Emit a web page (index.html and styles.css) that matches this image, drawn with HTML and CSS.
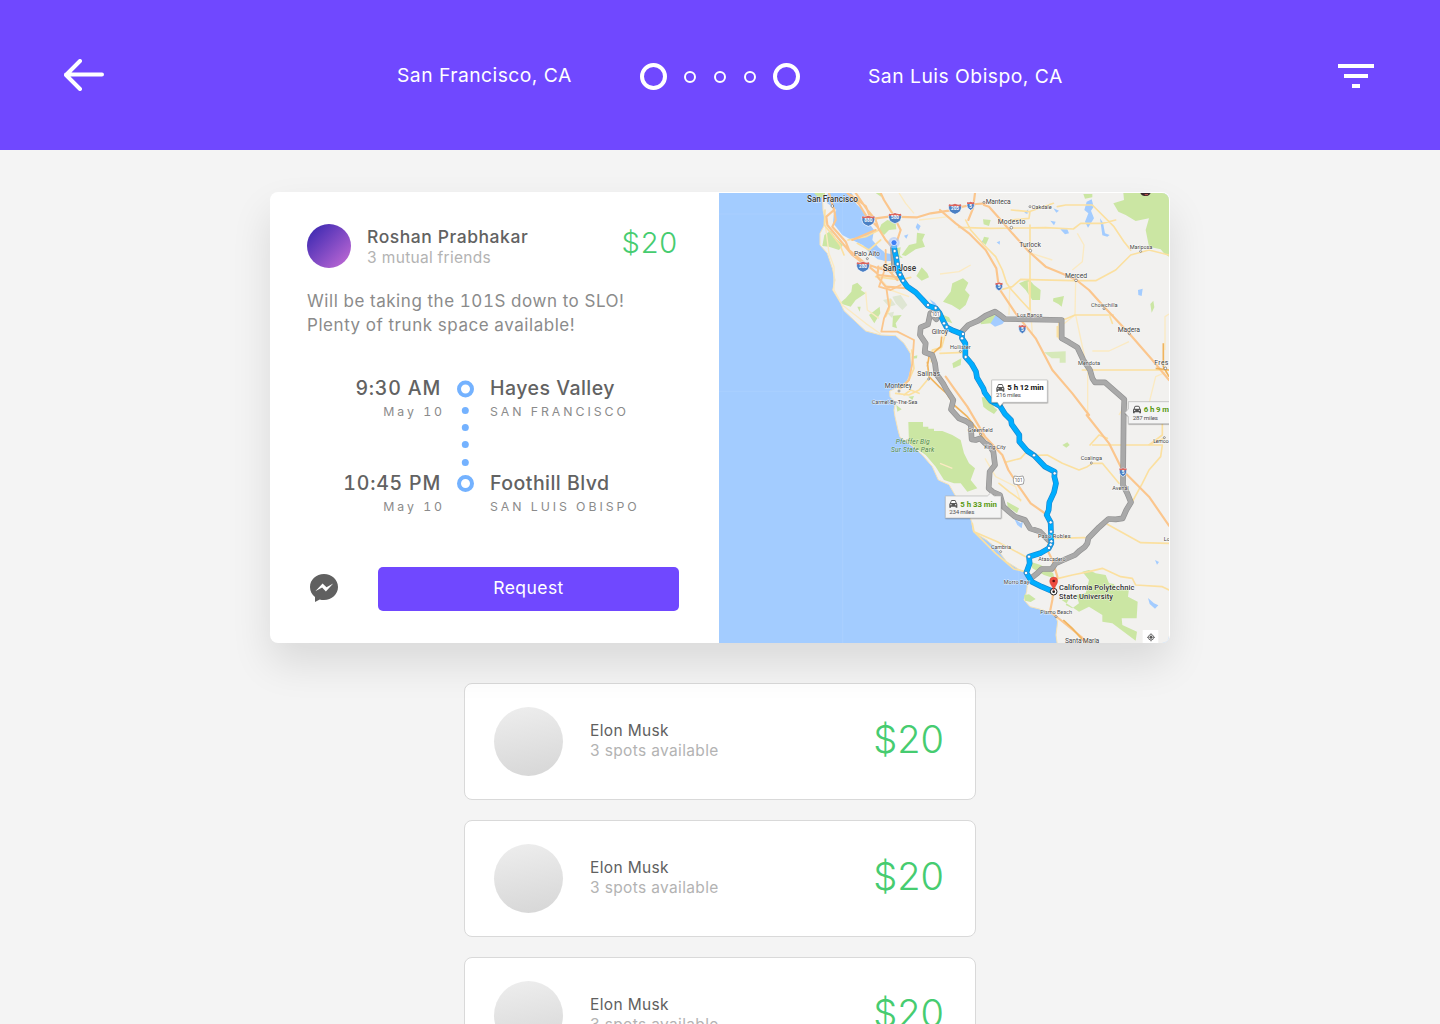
FILE: index.html
```html
<!DOCTYPE html>
<html lang="en">
<head>
<meta charset="utf-8">
<title>Rides</title>
<link rel="stylesheet" href="styles.css">
</head>
<body>
<header class="topbar">
  <svg class="back" width="40" height="32" viewBox="0 0 40 32" fill="none" stroke="#fff" stroke-width="4" stroke-linecap="round" stroke-linejoin="round"><path d="M16 2 2 16l14 14M2 15.500h36"/></svg>
  <span class="from">San Francisco, CA</span>
  <span class="stops"><i class="big"></i><i></i><i></i><i></i><i class="big"></i></span>
  <span class="to">San Luis Obispo, CA</span>
  <svg class="filter" width="36" height="24" viewBox="0 0 36 24" fill="#fff"><path d="M0 0h36v4H0zM6 10h24v4H6zM14 20h8v4h-8z"/></svg>
</header>
<main>
  <section class="ride">
    <div class="details">
      <div class="driver">
        <span class="avatar"></span>
        <div class="who"><div class="name">Roshan Prabhakar</div><div class="mutual">3 mutual friends</div></div>
        <div class="fare">$20</div>
      </div>
      <p class="note">Will be taking the 101S down to SLO!<br>Plenty of trunk space available!</p>
      <div class="trip">
        <div class="times">
          <div class="leg"><b>9:30 AM</b><small>May 10</small></div>
          <div class="leg"><b>10:45 PM</b><small>May 10</small></div>
        </div>
        <svg class="track" width="17" height="113" viewBox="0 0 17 113"><g fill="none" stroke="#74b2ff" stroke-width="4"><circle cx="8.500" cy="9" r="6.500"/><circle cx="8.500" cy="103.500" r="6.500"/></g><g fill="#74b2ff"><circle cx="8.300" cy="30.500" r="3.500"/><circle cx="8.300" cy="47.500" r="3.500"/><circle cx="8.300" cy="64.500" r="3.500"/><circle cx="8.300" cy="82.500" r="3.500"/></g></svg>
        <div class="places">
          <div class="leg"><b>Hayes Valley</b><small>SAN FRANCISCO</small></div>
          <div class="leg"><b>Foothill Blvd</b><small>SAN LUIS OBISPO</small></div>
        </div>
      </div>
      <div class="actions">
        <svg class="messenger" width="28" height="28" viewBox="0 0 28 28"><path fill="#606060" d="M14 0C6.200 0 0 5.700 0 12.900c0 4.100 1.900 7.700 5 10V28l4.700-2.600c1.300.4 2.800.6 4.300.6 7.800 0 14-5.800 14-13S21.800 0 14 0z"/><path fill="#fff" d="M5.300 17.200 12.600 9.400l3.900 3.800 6.700-3.700-7.300 7.900-3.800-4z"/></svg>
        <button class="request">Request</button>
      </div>
    </div>
    <svg class="map" width="450" height="450" viewBox="0 9 1350 1350">
      <defs>
        <g id="shield"><path d="M-18-11Q-9-8 0-13 9-8 18-11 22 0 16 10 9 16 0 19-9 16-16 10-22 0-18-11z" fill="#4a7fc4" stroke="#fff" stroke-width="2"/><path d="M-18-11Q-9-8 0-13 9-8 18-11L19-5H-19z" fill="#e0665c"/></g>
        <g id="shield-s"><path d="M-10-11Q-5-8 0-12 5-8 10-11 13 2 8 8L0 14-8 8Q-13 2-10-11z" fill="#4a7fc4" stroke="#fff" stroke-width="2"/><path d="M-10-11Q-5-8 0-12 5-8 10-11L11-5H-11z" fill="#e0665c"/></g>
        <g id="car"><path d="M3 9 6 2Q7 0 9 0h8q2 0 3 2l3 7 2 3v11h-5v-3H6v3H1V12z" fill="#555"/><path d="M6 9h14l-2-6H8z" fill="#fff"/><circle cx="6" cy="14" r="2" fill="#fff"/><circle cx="20" cy="14" r="2" fill="#fff"/></g>
      </defs>
      <path fill="#a3ccff" d="M0 0h1350v1360H0z"/>
      <path fill="#f2f1ef" stroke="#f6e3b8" stroke-width="3" d="M310 0 312 60 320 98 303 130 303 165 325 190 340 235 348 270 341 300 365 340 375 362 410 395 440 423 485 435 530 437 555 460 574 490 578 530 570 560 560 585 530 595 512 603 513 620 530 637 525 660 528 680 537 720 543 742 580 768 610 795 640 830 658 870 690 884 708 915 748 970 758 995 763 1025 803 1050 833 1075 863 1115 903 1140 921 1150 926 1175 923 1205 915 1230 933 1250 973 1260 1008 1275 1016 1295 1011 1335 1016 1370H1370V0z"/>
      <!-- bays and lakes -->
      <g fill="#a3ccff">
        <path d="M350 0 385 0 400 12 412 42 440 70 450 100 465 120 460 150 478 172 495 185 500 198 488 203 505 214 476 208 450 186 432 166 400 150 388 145 370 135 352 112 342 100 344 75 352 60 340 50 325 40 320 20 330 5z"/>
        <path d="M595 100 605 108 598 122 590 112zM555 137 568 133 562 146zM632 328 648 338 660 355 645 348zM487 187 515 192 520 213 498 214 480 204zM806 390 830 375 848 383 866 382 850 402 828 410 812 398zM1103 35 1118 28 1124 50 1116 62 1125 85 1107 113 1098 95 1108 70 1096 60zM1143 85 1152 98 1158 130 1172 135 1165 140 1150 136zM1024 118 1045 118 1050 130 1038 133zM994 92 1010 95 1005 106zM1257 300 1271 296 1268 318 1258 315zM1003 55 1020 62 1012 68zM916 68 928 58 925 72zM885 985 905 1000 912 992 908 1015 895 1005zM1287 1224 1305 1240 1318 1246 1308 1256 1292 1242zM1308 1110 1320 1116 1314 1124zM785 155 793 150 793 165zM833 157 843 153 842 164z"/>
      </g>
      <!-- parks -->
      <g fill="#cbe6a3">
        <path d="M285 9 318 9 318 18 300 24zM316 135 335 122 350 145 372 165 360 180 330 170 310 168zM400 285 415 278 430 293 425 300 440 310 410 330 395 350 362 340 380 325 397 305zM415 350 425 350 422 365zM487 103 505 90 530 98 532 118 510 120 495 135 480 120zM470 9 486 9 486 20zM594 128 618 132 610 150 618 170 590 178 560 198 548 195 570 165 592 160zM530 175 545 172 542 195 552 205 530 200zM608 232 625 250 630 262 608 272 592 258zM450 375 482 350 484 370 466 400zM522 377 548 375 530 400 534 415 520 410zM578 500 595 496 594 505 580 506zM532 645 548 658 535 665zM568 620 585 618 580 630zM660 370 690 382 700 400 680 393z"/>
        <path d="M700 280 732 265 748 278 738 300 752 315 740 345 722 360 698 345 672 335 695 305zM787 378 830 375 815 400 785 403zM900 280 930 268 945 285 965 300 963 330 940 330 920 300zM1003 325 1035 318 1028 350 1018 342 1002 334zM1294 342 1303 332 1306 352 1298 368zM792 88 815 90 810 108 794 103zM795 140 810 143 800 165 790 155zM1093 12 1120 12 1120 22 1098 26zM1183 40 1215 30 1213 9 1350 9V200L1335 190 1325 178 1290 170 1280 120 1290 85 1250 93 1220 75 1198 65zM700 520 727 505 725 525 703 535z"/>
        <path d="M975 487 1040 484 1040 518 1022 518 1022 505 998 505z" opacity=".7"/>
        <path d="M788 622 826 620 824 650 835 660 825 672 805 660 793 650zM568 696H612V710H628V716H645V723H670L700 735 725 750 735 790 750 820 768 835 755 870 775 895 745 905 725 880 705 880 675 870 650 830 620 795 570 760zM1030 765 1045 757 1052 765 1042 773zM864 935 900 955 894 970 866 950zM934 1115 965 1125 1003 1150 1005 1165 975 1155 940 1135zM915 1215 930 1213 950 1227 935 1236 918 1232zM1028 1230 1050 1227 1040 1245 1060 1255 1080 1240 1072 1215 1100 1210 1110 1170 1090 1145 1110 1140 1130 1150 1160 1155 1170 1180 1185 1182 1190 1200 1230 1195 1227 1220 1256 1235 1253 1285 1208 1285 1210 1305 1254 1325 1250 1352 1220 1330 1180 1300 1150 1295 1150 1275 1110 1250 1080 1265z"/>
      </g>
      <g fill="#dfe6d3"><path d="M520 320 545 315 565 345 550 360 530 340zM492 330 515 325 530 345 510 350zM505 370 525 365 520 385z"/></g>
      <!-- minor roads -->
      <g fill="none" stroke="#fbeac2" stroke-width="4" stroke-linejoin="round">
        <path d="M318 98 330 190 345 230 345 300 370 345 440 400 485 432M440 305 445 360 480 385M480 262 515 300 570 320M600 90 690 80M585 70 560 40 540 9M640 480 665 480 668 435M1070 270 1068 375 1030 405M928 275 940 430M663 252 720 245 755 225M872 295 870 375M1106 545V675M1070 375 1105 540M1120 483H1170L1230 455M1338 480V380L1350 372M1345 545 1310 560 1290 640"/>
        <path d="M663 820 700 835M798 805 830 860 890 890 905 935M1220 640 1200 675M1075 130 1095 165 1090 215 1060 240M937 190 1000 210"/>
      </g>
      <g fill="none" stroke="#fbe0a0" stroke-width="5" stroke-linejoin="round" stroke-linecap="round">
        <path d="M318 60 316 105 340 135 363 165 375 195M387 150 440 140 480 120M415 160 450 180 485 150M478 235 520 220M470 260 545 270 575 262M515 330 510 360 500 380M600 610 575 600 555 615M540 595 570 570 585 535 578 480M530 610 570 615 600 600 625 570M663 490 735 487M637 515 640 480 668 472 685 410"/>
        <path d="M719 112 815 115 980 113 1063 117 1085 100 1150 100 1190 90M933 105V360L905 330 878 300 863 280 850 240 830 200 795 165 755 120 740 90M850 298 880 290 905 268 1060 272H1130L1190 240 1235 195 1290 180 1350 195M877 60 930 65 1003 40M1015 50 1040 45 1120 45 1185 110 1215 155 1235 180M1015 410V440M1020 388V445M1110 375H1183M860 387H1040L1068 375H1165M1090 540H1350M1173 380 1180 400M875 90 930 85 933 65"/>
        <path d="M858 817 905 805 925 783M945 796 985 795 1030 820 1080 840 1105 830 1120 820 1150 820 1175 850 1200 880M1121 765H1330L1325 800 1290 840 1270 880 1240 935M1113 765 1140 735 1165 745M1288 765 1335 745M1165 1003 1265 1058 1350 1060M1000 1045 1098 1043M1018 1165 1060 1155 1110 1145 1150 1135 1205 1160 1240 1165 1250 1185 1330 1190 1350 1200M760 1000 765 1025 835 1055 920 1100M765 1025 830 1090 885 1137 920 1145M1290 765 1330 735V675M840 880 870 905 905 930"/>
      </g>
      <!-- highways -->
      <g fill="none" stroke="#fbc68d" stroke-width="6.500" stroke-linejoin="round" stroke-linecap="round">
        <path d="M330 9 345 60 322 80 325 105 350 135 375 165 400 195 430 218 470 232 520 245 545 235M345 55 350 90 340 110 380 155 390 180 420 205 450 230 480 255 540 262 560 275M385 9 420 42 440 75 475 110 500 150 520 172M410 9 445 60 470 90 480 120M395 15 440 48 455 85M470 85 510 80 595 82 635 70 690 62 720 52 772 42 800 40M485 9 495 30 520 70 545 120 535 150M478 230 475 260 500 290 570 295M500 230 535 270M400 150 470 120"/>
        <path stroke-width="5.500" d="M500 180 500 230 480 290 515 300 545 285M503 300 510 350 495 385 487 425M487 425 535 425 585 450 580 520 570 570 545 595"/>
        <path d="M768 9 762 55 748 90M795 45 810 50 850 95 880 130 930 185 980 230 1040 255 1072 270 1110 300 1155 350 1230 430 1300 510 1350 570M663 60 710 100 750 130 800 180 832 235 840 295 890 370 950 445 1000 540 1060 610 1110 675"/>
        <path d="M1103 675 1170 760 1210 840 1240 870 1290 920 1350 1007M680 560 705 595 745 650 798 740 850 795 868 840 900 890 935 940 985 975 995 1030 985 1080 1000 1110 1015 1160 1003 1205 1000 1230 993 1265 1025 1290 1080 1335 1110 1360"/>
      </g>
      <g fill="none" stroke="#f0b45e" stroke-width="5" stroke-linejoin="round"><path d="M625 515 630 560 660 590 683 610 705 645 745 680 780 725 800 755M668 440 665 470 630 500 625 530M1333 460V530L1350 560M1310 535 1350 540M1033 1290 1060 1315 1100 1360"/></g>
      <g stroke="#fff" opacity=".22"><path d="M371 9V1360M0 72H330M0 604H520M899 1000V1360"/></g>
      <!-- alternative routes -->
      <g fill="none" stroke="#929292" stroke-width="17" stroke-linejoin="round" stroke-linecap="round">
        <path id="alt" d="M522 175 525 225 545 258M652 388 634 370 627 403 605 412 603 435 620 460 617 487 640 495 648 520 652 552 672 580 683 600 703 630 696 658 720 685 740 693 755 703 758 748 770 750 783 745 798 760 812 768 823 785 828 825 812 845 809 895 822 906 843 915 853 950 870 965 888 980 918 990 933 1015 963 1025 988 1050M729 425 748 405 778 392 800 377 828 365 840 373 858 387 1028 390 1028 445 1050 457 1075 472 1093 510 1113 540 1120 565 1128 577 1158 577 1175 592 1216 628 1214 675 1212 885 1225 910 1236 937 1222 960 1211 985 1190 988 1168 987 1140 1012 1108 1045 1105 1060 1098 1070 1082 1082 1068 1095 1033 1110 1010 1120 998 1137 968 1137 955 1150 938 1163"/>
        <use href="#alt" stroke="#a9a9a9" stroke-width="13"/>
      </g>
      <g fill="none" stroke="#1b87cf" stroke-width="17" stroke-linejoin="round">
        <path id="main-route" d="M525 166 527 182 532 205 536 235 543 255 552 272 565 290 590 307 610 328 627 347 650 355 662 370 672 392 683 412 703 422 729 432 729 445 739 460 739 500 758 522 771 545 774 563 793 595 797 608 815 632 843 648 858 672 876 690 878 703 901 735 901 755 925 783 945 796 978 830 1007 845 1006 860 1011 880 1005 907 991 937 989 960 983 975 995 997 997 1060 989 1075 963 1090 930 1100 932 1120 922 1148 938 1175 968 1190 1003 1205"/>
        <use href="#main-route" stroke="#00aeff" stroke-width="13"/>
      </g>
      <g fill="#fff" stroke="#1b75bc" stroke-width="2"><circle cx="527" cy="183" r="5"/><circle cx="534" cy="203" r="5"/><circle cx="536" cy="222" r="5"/><circle cx="543" cy="254" r="5"/><circle cx="552" cy="272" r="5"/><circle cx="627" cy="345" r="5"/><circle cx="650" cy="354" r="5"/><circle cx="675" cy="400" r="5"/><circle cx="683" cy="411" r="5"/><circle cx="732" cy="432" r="5"/><circle cx="729" cy="445" r="5"/><circle cx="740" cy="501" r="5"/><circle cx="945" cy="796" r="5"/><circle cx="1007" cy="850" r="5"/><circle cx="995" cy="997" r="5"/><circle cx="996" cy="1025" r="5"/><circle cx="997" cy="1054" r="5"/><circle cx="995" cy="1064" r="5"/><circle cx="990" cy="1074" r="5"/><circle cx="930" cy="1100" r="5"/><circle cx="921" cy="1149" r="5"/></g>
      <circle cx="525" cy="158" r="17" fill="#a9c6fa" opacity=".6"/><circle cx="525" cy="158" r="9" fill="#4080f5" stroke="#fff" stroke-width="2"/>
      <!-- town markers -->
      <g fill="#fff" stroke="#666" stroke-width="2"><circle cx="340" cy="48" r="4"/><circle cx="445" cy="206" r="3"/><circle cx="629" cy="567" r="3"/><circle cx="540" cy="603" r="3"/><circle cx="795" cy="37" r="3"/><circle cx="933" cy="50" r="3"/><circle cx="877" cy="113" r="4"/><circle cx="934" cy="182" r="4"/><circle cx="1265" cy="184" r="3"/><circle cx="1071" cy="271" r="4"/><circle cx="1155" cy="356" r="3"/><circle cx="1231" cy="431" r="3"/><circle cx="1339" cy="535" r="4"/><circle cx="724" cy="484" r="3"/><circle cx="845" cy="1085" r="3"/><circle cx="1117" cy="819" r="3"/><circle cx="785" cy="733" r="3"/><circle cx="1011" cy="1280" r="3"/><circle cx="1336" cy="743" r="3"/></g>
      <!-- highway shields -->
      <g class="shield-text">
        <use href="#shield" x="448" y="90"/><text x="448" y="96">880</text>
        <use href="#shield" x="528" y="82"/><text x="528" y="88">580</text>
        <use href="#shield" x="432" y="228"/><text x="432" y="234">280</text>
        <use href="#shield" x="708" y="54"/><text x="708" y="60">205</text>
        <use href="#shield-s" x="755" y="47"/><text x="755" y="53">5</text>
        <use href="#shield-s" x="840" y="289"/><text x="840" y="295">5</text>
        <use href="#shield-s" x="910" y="417"/><text x="910" y="423">5</text>
        <use href="#shield-s" x="1212" y="846"/><text x="1212" y="852">5</text>
      </g>
      <g class="us-route"><path d="M638 362q10 3 24 0 5 9 1 19-13 4-26 0-4-10 1-19z"/><text x="650" y="378">101</text><path d="M886 858q13 4 26 0 6 11 1 24-14 5-28 0-5-13 1-24z"/><text x="899" y="877">101</text></g>
      <!-- place names -->
      <g class="town">
        <text class="city" x="264" y="36" textLength="153">San Francisco</text>
        <text x="405" y="197" textLength="78">Palo Alto</text>
        <text class="city" x="491" y="242" textLength="100">San Jose</text>
        <text x="638" y="432" textLength="49">Gilroy</text>
        <text x="595" y="558" textLength="68">Salinas</text>
        <text x="497" y="595" textLength="82">Monterey</text>
        <text class="small" x="458" y="641" textLength="137">Carmel-By-The-Sea</text>
        <text x="800" y="42" textLength="75">Manteca</text>
        <text class="small" x="938" y="56" textLength="60">Oakdale</text>
        <text x="836" y="102" textLength="83">Modesto</text>
        <text x="901" y="172" textLength="65">Turlock</text>
        <text class="small" x="1232" y="178" textLength="68">Mariposa</text>
        <text x="1038" y="263" textLength="66">Merced</text>
        <text class="small" x="1116" y="350" textLength="80">Chowchilla</text>
        <text class="small" x="894" y="380" textLength="76">Los Banos</text>
        <text x="1196" y="425" textLength="67">Madera</text>
        <text class="small" x="1077" y="525" textLength="66">Mendota</text>
        <text class="small" x="693" y="477" textLength="62">Hollister</text>
        <text x="1306" y="525" textLength="42">Fres</text>
        <text class="small" x="746" y="726" textLength="75">Greenfield</text>
        <text class="small" x="796" y="776" textLength="64">King City</text>
        <text class="small" x="1085" y="811" textLength="64">Coalinga</text>
        <text class="small" x="1180" y="899" textLength="49">Avenal</text>
        <text class="small" x="1303" y="760" textLength="46">Lemoo</text>
        <text class="small" x="1334" y="1054">Lo</text>
        <text class="small" x="957" y="1044" textLength="98">Paso Robles</text>
        <text class="small" x="958" y="1113" textLength="82">Atascadero</text>
        <text class="small" x="816" y="1078" textLength="60">Cambria</text>
        <text class="small" x="854" y="1182" textLength="77">Morro Bay</text>
        <text class="small" x="964" y="1273" textLength="95">Pismo Beach</text>
        <text x="1038" y="1359" textLength="103">Santa Maria</text>
        <text class="park" x="530" y="762" textLength="102">Pfeiffer Big</text>
        <text class="park" x="516" y="786" textLength="130">Sur State Park</text>
        <text class="dest" x="1020" y="1199" textLength="226">California Polytechnic</text>
        <text class="dest" x="1020" y="1226" textLength="162">State University</text>
      </g>
      <!-- destination pin -->
      <circle cx="1004" cy="1205" r="10" fill="#fff" stroke="#222" stroke-width="3"/><circle cx="1004" cy="1205" r="4" fill="#222"/>
      <path d="M1004 1203c-1-14-12-18-12-30a12 12 0 0 1 24 0c0 12-11 16-12 30z" fill="#ee4b3e" stroke="#b93a30" stroke-width="1"/><circle cx="1004" cy="1173" r="4" fill="#5d1210"/>
      <!-- route callouts -->
      <g class="callout">
        <path d="M818 570H985V637H853L843 649 835 637H818z"/><use href="#car" x="831" y="582"/><text class="dur" x="865" y="600" textLength="109">5 h 12 min</text><text class="mi" x="831" y="622" textLength="75">216 miles</text>
        <path class="alt" d="M679 918H805L815 909 825 918H846V984H679z"/><use href="#car" x="690" y="930"/><text class="dur green" x="724" y="950" textLength="110">5 h 33 min</text><text class="mi" x="691" y="971" textLength="75">234 miles</text>
        <path class="alt" d="M1228 635H1360V701H1228V680L1218 668 1228 657z"/><use href="#car" x="1241" y="647"/><text class="dur green" x="1274" y="667" textLength="76">6 h 9 m</text><text class="mi" x="1241" y="689" textLength="76">287 miles</text>
      </g>
      <path d="M1264 9h31q-5 11-18 9-9 0-13-9z" fill="#38262b"/><path d="M1277 12h10v4h-10z" fill="#b6564d"/>
      <path d="M1271 1320h47v40h-47z" fill="#fff"/><g fill="none" stroke="#555" stroke-width="2.500"><circle cx="1296" cy="1342" r="8"/><path d="M1296 1330v4M1296 1350v4M1284 1342h4M1304 1342h4"/></g><circle cx="1296" cy="1342" r="4.500" fill="#555"/>
    </svg>
  </section>
  <div class="list">
    <article class="offer"><span class="face"></span><div class="info"><div class="driver-name">Elon Musk</div><div class="spots">3 spots available</div></div><div class="price">$20</div></article>
    <article class="offer"><span class="face"></span><div class="info"><div class="driver-name">Elon Musk</div><div class="spots">3 spots available</div></div><div class="price">$20</div></article>
    <article class="offer"><span class="face"></span><div class="info"><div class="driver-name">Elon Musk</div><div class="spots">3 spots available</div></div><div class="price">$20</div></article>
  </div>
</main>
</body>
</html>
```
FILE: styles.css
```css
* { box-sizing: border-box; }
body { margin: 0; height: 1024px; overflow: hidden; background: #f4f4f4; font-family: Inter, "Liberation Sans", sans-serif; white-space: nowrap; }
svg { display: block; }

.topbar { height: 150px; padding: 0 0 0 64px; background: #7048ff; color: #fff; font-size: 19.300px; line-height: 24px; display: grid; grid-template-columns: 333px 243px 228px 470px 36px; align-items: center; }
.from { letter-spacing: .47px; }
.to { letter-spacing: .5px; margin-top: 2px; }
.stops { width: 160px; margin-top: 3px; display: flex; align-items: center; }
.stops i { width: 12px; height: 12px; margin-left: 18px; border: 2px solid #fff; border-radius: 50%; }
.stops .big { width: 27px; height: 27px; margin-left: 17px; border-width: 4px; }
.stops .big:first-child { margin: 0 -1px 0 0; }
.filter { margin-top: 2px; }

main { padding-top: 42px; display: flex; flex-direction: column; align-items: center; gap: 40px; }
.ride { width: 900px; height: 451px; padding: 1px 1px 0 0; border-radius: 8px; background: #fff; box-shadow: 0 20px 40px rgba(0, 0, 0, .11); display: flex; position: relative; z-index: 1; }
.details { width: 449px; padding: 31px 40px 32px 37px; font-feature-settings: "tnum"; }
.map { border-radius: 0 7px 7px 0; }

.driver { height: 44px; display: flex; }
.avatar { width: 44px; height: 44px; border-radius: 50%; background: linear-gradient(135deg, #3023ae, #c86dd7); }
.who { margin-left: 16px; padding-top: 2px; flex: 1; }
.name { font-size: 17.500px; line-height: 22px; font-weight: 500; color: #626262; letter-spacing: .55px; }
.mutual { font-size: 15.500px; line-height: 20px; color: #b3b3b3; letter-spacing: .3px; }
.fare { margin: 0 1px; font-size: 29px; line-height: 37px; font-weight: 300; color: #46cc70; letter-spacing: .8px; font-feature-settings: normal; }
.note { margin: 21px 0 0; font-size: 17px; line-height: 24px; color: #8b8b8b; letter-spacing: .55px; }
.trip { margin-top: 39px; display: flex; }
.times { width: 134px; text-align: right; }
.times b { letter-spacing: .8px; }
.times small { margin-right: -4px; }
.leg { height: 95px; display: flex; flex-direction: column; }
.leg b { font-size: 19.500px; line-height: 24px; font-weight: 500; color: #626262; }
.leg small { font-size: 12.300px; line-height: 16px; margin-top: 4px; color: #8b8b8b; letter-spacing: 2.950px; }
.track { margin: 4px 0 0 16px; }
.places { margin-left: 16px; }
.places b { letter-spacing: .47px; }
.actions { display: flex; margin-top: 1px; }
.messenger { margin: 7px 0 0 3px; }
.request { margin: 0 0 0 40px; width: 301px; height: 44px; padding: 0 0 2px; border: 0; border-radius: 5px; background: #7048ff; color: #fff; font: 17.500px/24px Inter, sans-serif; letter-spacing: .45px; }

.list { display: flex; flex-direction: column; gap: 20px; }
.offer { width: 512px; height: 117px; border: 1px solid #d9d9d9; border-radius: 8px; background: #fff; padding: 23px 31px 0 29px; display: flex; }
.face { width: 69px; height: 69px; border-radius: 50%; background: linear-gradient(170deg, #eee, #d6d6d6); }
.info { margin-left: 27px; padding-top: 14px; flex: 1; font-size: 15.500px; line-height: 20px; letter-spacing: .35px; }
.driver-name { color: #606060; }
.spots { color: #b3b3b3; }
.price { font-size: 38px; line-height: 46px; padding-top: 9px; font-weight: 300; color: #46cc70; }

.town text { font: 20.500px Roboto, sans-serif; fill: #444; stroke: #fff; stroke-width: 3px; stroke-opacity: .7; paint-order: stroke; }
.town .city { font-size: 24.500px; font-weight: 500; fill: #333; }
.town .small { font-size: 17px; }
.town .park { font-size: 20px; font-style: italic; fill: #4f8746; stroke-opacity: .35; }
.town .dest { font-size: 22.500px; font-weight: 500; fill: #333; }
.shield-text text { font: bold 14px Roboto, sans-serif; fill: #fff; text-anchor: middle; }
.us-route path { fill: #fff; stroke: #777; stroke-width: 2px; }
.us-route text { font: 14px Roboto, sans-serif; fill: #555; text-anchor: middle; }
.callout > path { fill: #fff; stroke: #bbb; stroke-width: 2px; filter: drop-shadow(1px 2px 2px rgba(0, 0, 0, .35)); }
.callout > .alt { fill: #f4f4f4; }
.dur { font: bold 23.500px Roboto, sans-serif; fill: #111; }
.green { fill: #5a9a12; }
.mi { font: 18.500px Roboto, sans-serif; fill: #555; }
```
